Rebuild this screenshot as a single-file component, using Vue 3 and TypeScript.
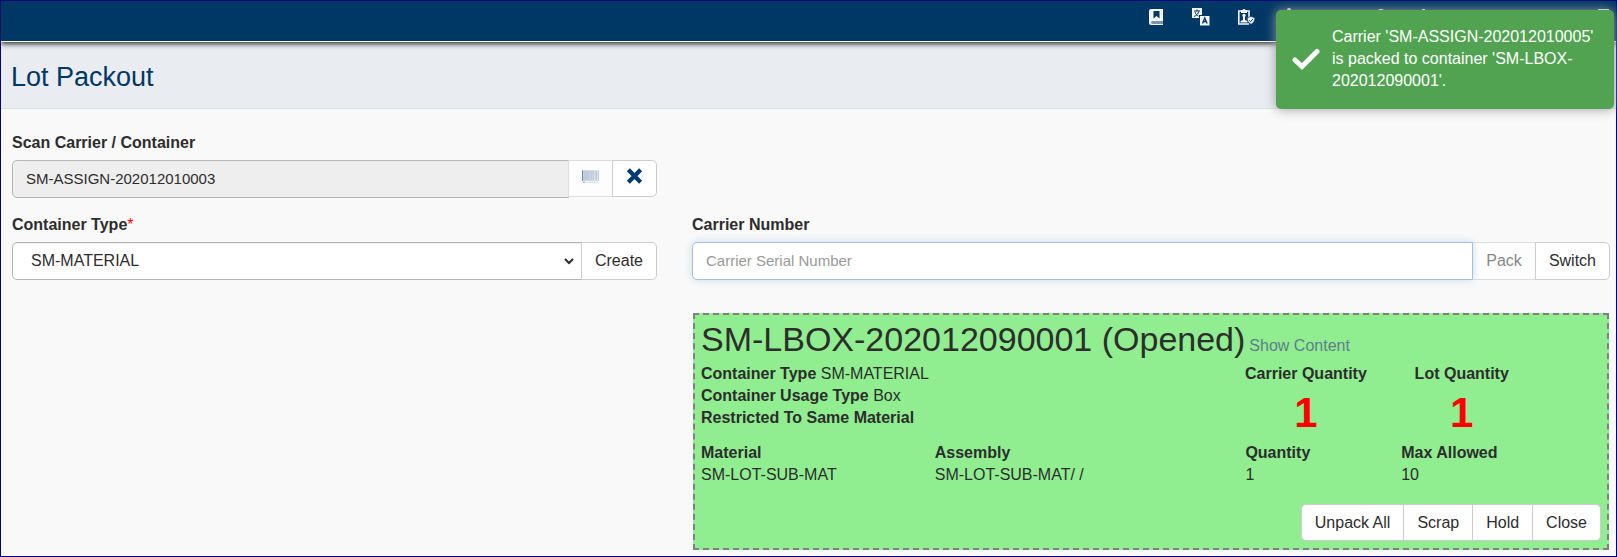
<script setup lang="ts">
import { ref } from 'vue'

const scanned = ref('SM-ASSIGN-202012010003')
const containerType = ref('SM-MATERIAL')
const carrierSerial = ref('')

const details = [
  { label: 'Material', value: 'SM-LOT-SUB-MAT' },
  { label: 'Assembly', value: 'SM-LOT-SUB-MAT/ /' },
  { label: 'Quantity', value: '1' },
  { label: 'Max Allowed', value: '10' },
]
const counters = [
  { label: 'Carrier Quantity', value: 1 },
  { label: 'Lot Quantity', value: 1 },
]
const actions = ['Unpack All', 'Scrap', 'Hold', 'Close']
</script>

<template>
  <div class="page">
    <header class="topbar">
      <nav class="tools">
        <button type="button" aria-label="Manual">
          <svg width="18" height="18" viewBox="0 0 18 18">
            <path fill="#f4f4f4" fill-rule="evenodd" d="M4 1h12v12.500H4.500v2H16V17H4a2 2 0 0 1-2-2V3a2 2 0 0 1 2-2zM6.500 3v7.500l3-2.500 3 2.500V3z" />
            <path d="M5 14.500h11" stroke="#7d93aa" />
          </svg>
        </button>
        <button type="button" aria-label="Language">
          <svg width="18" height="18" viewBox="0 0 18 18">
            <path fill="#f4f4f4" d="M0 0h10v7H7v3H0z" />
            <path d="M2 3h6M5 1.500V3M6.700 3.500C6 6 4.500 7.500 2 8.500M3 4c.5 1.800 1.500 3 3.500 4" fill="none" stroke="#003865" />
            <path fill="#f4f4f4" d="M8 8h9.500v9.500H8z" />
            <path d="M10.500 15.500l2.300-5.500 2.300 5.500M11.500 13.500h2.800" fill="none" stroke="#003865" stroke-width="1.300" />
          </svg>
        </button>
        <button type="button" aria-label="Assignments">
          <svg width="18" height="18" viewBox="0 0 18 18">
            <path d="M12 16H1.800V3H12v6" fill="none" stroke="#f4f4f4" stroke-width="1.600" />
            <path fill="#f4f4f4" d="M4 2h1.500a1.700 1.700 0 0 1 3 0H10v3H4z" />
            <circle cx="7" cy="7.500" r="1.700" fill="#f4f4f4" />
            <path fill="#f4f4f4" d="M6 9h2v3l2.500 1v1.500h-7V13L6 12z" />
            <path fill="#f4f4f4" stroke="#003865" stroke-width=".6" d="M14 8.500l3.800 1.200c0 3-1 5-3.800 6.600-2.800-1.600-3.800-3.600-3.800-6.600z" />
            <path d="M12.200 12.300l1.400 1.400 2.300-2.700" fill="none" stroke="#003865" />
          </svg>
        </button>
      </nav>
      <div class="account">
        <svg width="18" height="18" viewBox="0 0 18 18">
          <path fill="#f4f4f4" d="M7 0a2 2 0 0 1 2 2c3 1 4 3 4 6v4l2 2H0l2-2V8c0-3 1-5 3-6a2 2 0 0 1 2-2z" />
        </svg>
        <svg class="person" width="18" height="18" viewBox="0 0 18 18">
          <circle cx="8" cy="6" r="5" fill="#f4f4f4" />
          <path fill="#f4f4f4" d="M0 17a8 6 0 0 1 16 0z" />
        </svg>
        <svg width="18" height="18" viewBox="0 0 18 18">
          <path fill="#f4f4f4" d="M8 1h3v3H8zM8 5h3v11H8z" />
        </svg>
        <svg class="menu" width="18" height="18" viewBox="0 0 18 18">
          <path fill="#f4f4f4" d="M3 1h11v14H3z" />
        </svg>
      </div>
    </header>

    <div class="heading"><h1>Lot Packout</h1></div>

    <main class="content">
      <section class="field">
        <label for="scan">Scan Carrier / Container</label>
        <div class="group">
          <input id="scan" v-model="scanned" type="text" readonly />
          <button type="button" class="icon" aria-label="Scan" disabled>
            <svg width="18" height="13" viewBox="0 0 18 13">
              <path fill="#bdcbdb" d="M0 0h18v11H0z" />
              <path fill="#6b8db3" d="M0 0h1v11H0zM1 12h2v1H1zM8 12h1v1H8zM13 12h1v1h-1z" />
              <path fill="#cfdae5" d="M8 0h1v11H8zM11 0h1v11h-1zM3 12h4v1H3zM9 12h3v1H9zM15 12h2v1h-2z" />
              <path fill="#e6ebf1" d="M13 0h1v11h-1zM16 0h1v11h-1z" />
            </svg>
          </button>
          <button type="button" class="icon" aria-label="Clear">
            <svg width="18" height="18" viewBox="0 0 18 18">
              <path d="M2.500 2.500l13 13M15.500 2.500l-13 13" stroke="#003c71" stroke-width="4.500" />
            </svg>
          </button>
        </div>
      </section>

      <section class="field left">
        <label for="type">Container Type<span class="required">*</span></label>
        <div class="group">
          <select id="type" v-model="containerType">
            <option>SM-MATERIAL</option>
          </select>
          <svg class="chevron" width="10" height="38" viewBox="0 0 10 38">
            <path d="M1 17l4 4 4-4" fill="none" stroke="#2d2d2d" stroke-width="2" />
          </svg>
          <button type="button">Create</button>
        </div>
      </section>

      <section class="field right">
        <label for="carrier">Carrier Number</label>
        <div class="group">
          <input id="carrier" v-model="carrierSerial" class="active" type="text" placeholder="Carrier Serial Number" />
          <button type="button" disabled>Pack</button>
          <button type="button">Switch</button>
        </div>
      </section>

      <section class="container-card">
        <div class="title">
          <h2>SM-LBOX-202012090001 (Opened)</h2>
          <a href="#content">Show Content</a>
        </div>
        <div class="summary">
          <div class="facts">
            <div><b>Container Type</b> SM-MATERIAL</div>
            <div><b>Container Usage Type</b> Box</div>
            <div><b>Restricted To Same Material</b></div>
          </div>
          <div v-for="c in counters" :key="c.label" class="counter">
            <b>{{ c.label }}</b>
            <strong>{{ c.value }}</strong>
          </div>
        </div>
        <div class="details">
          <div v-for="d in details" :key="d.label">
            <b>{{ d.label }}</b>
            <div>{{ d.value }}</div>
          </div>
        </div>
        <div class="group actions">
          <button v-for="a in actions" :key="a" type="button">{{ a }}</button>
        </div>
      </section>
    </main>

    <div class="toast" role="status">
      <svg width="28" height="22" viewBox="0 0 28 22">
        <path d="M3 12l7 6.500L25 3.500" fill="none" stroke="#fff" stroke-width="5" stroke-linecap="round" />
      </svg>
      <p>Carrier 'SM-ASSIGN-202012010005' is packed to container 'SM-LBOX-202012090001'.</p>
    </div>
  </div>
</template>

<style>
body {
  margin: 0;
}
</style>

<style scoped>
* {
  box-sizing: border-box;
}
.page {
  position: relative;
  min-height: 100vh;
  border: 1px solid #000080;
  background: #f9f9f9;
  color: #2d2d2d;
  font: 16px/22px "Liberation Sans", Arial, sans-serif;
}
.topbar {
  position: relative;
  display: flex;
  justify-content: flex-end;
  height: 41px;
  padding-top: 7px;
  background: #003865;
  border-bottom: 1px solid #fff;
  box-shadow: 0 2px 5px #333;
}
.tools {
  display: flex;
  gap: 27px;
}
.tools button {
  width: 18px;
  height: 18px;
  padding: 0;
  border: 0;
  background: none;
}
.account {
  display: flex;
  gap: 23px;
  width: 361px;
  padding: 0 3px 0 27px;
}
.person {
  margin-left: 50px;
}
.menu {
  margin-left: auto;
}
svg {
  display: block;
}
.heading {
  padding: 19px 10px 15px;
  background: #e9ecf1;
  border-bottom: 1px solid #dbe0e7;
}
h1 {
  margin: 0;
  color: #003865;
  font-size: 27px;
  font-weight: 400;
  line-height: 32px;
}
.content {
  display: grid;
  grid-template-columns: 645fr 918fr;
  column-gap: 35px;
  padding: 23px 6px 5px 11px;
}
.field {
  margin-bottom: 16px;
}
.left {
  grid-area: 2 / 1;
}
.right {
  grid-area: 2 / 2;
}
label {
  display: block;
  margin-bottom: 6px;
  font-weight: 700;
}
.required {
  color: #f00;
  font-weight: 400;
}
.group {
  display: flex;
}
.group > * {
  height: 38px;
  margin: 0 0 0 -1px;
  border: 1px solid #ccc;
  border-radius: 0;
  background: #fff;
  color: inherit;
  font: inherit;
}
.group > :first-child {
  margin-left: 0;
  border-radius: 5px 0 0 5px;
}
.group > :last-child {
  border-radius: 0 5px 5px 0;
}
.group button {
  padding: 0 13px;
}
.group button:disabled {
  background: #fdfdfd;
  border-color: #ddd;
  color: #888;
}
.group .icon {
  display: flex;
  justify-content: center;
  width: 45px;
  height: 37px;
  padding-top: 6px;
}
.group .icon:disabled {
  padding-top: 9px;
}
input,
select {
  flex: 1;
  min-width: 0;
  padding: 0 13px;
  outline: 0;
}
.group input,
.group select {
  border-color: #b5b5b5;
  box-shadow: inset 0 1px 1px #eee;
}
.group select {
  padding: 0 32px 0 18px;
  appearance: none;
}
.group .chevron {
  margin: 0 8px 0 -18px;
  border: 0;
  background: none;
  pointer-events: none;
}
.group input {
  padding-bottom: 2px;
  font-size: 15px;
}
.group input:read-only {
  background: #eee;
}
.group .active {
  z-index: 1;
  border-color: #a4bfdc;
  box-shadow: 0 0 8px #c5dbf0;
}
input::placeholder {
  color: #999;
}
.container-card {
  grid-area: 3 / 2;
  margin: 17px 1px 0;
  padding: 5px 6px 7px;
  border: 2px dashed #808080;
  background: #90ee90;
}
.title {
  display: flex;
  align-items: baseline;
  gap: 4px;
  margin-bottom: 5px;
}
h2 {
  margin: 0;
  font-size: 34px;
  font-weight: 400;
  line-height: 38px;
}
a {
  color: #607d8b;
  text-decoration: none;
}
.summary,
.details {
  display: grid;
  grid-template-columns: 234fr 311fr 156fr 200fr;
}
.facts {
  grid-column: span 2;
}
.counter {
  display: flex;
  flex-direction: column;
  align-items: center;
  width: 121px;
  white-space: nowrap;
}
.counter strong {
  margin-bottom: 2px;
  color: #f00;
  font-size: 42px;
  line-height: 55px;
}
.group.actions {
  justify-content: flex-end;
  margin-top: 18px;
}
.actions > button {
  height: 37px;
}
.toast {
  position: absolute;
  top: 9px;
  right: 2px;
  display: flex;
  align-items: center;
  gap: 12px;
  width: 338px;
  height: 99px;
  padding: 0 16px 2px;
  border-radius: 5px;
  background: #51a351;
  box-shadow: 0 0 12px #999;
  color: #fff;
}
.toast svg {
  flex: none;
}
.toast p {
  margin: 0;
}
</style>
